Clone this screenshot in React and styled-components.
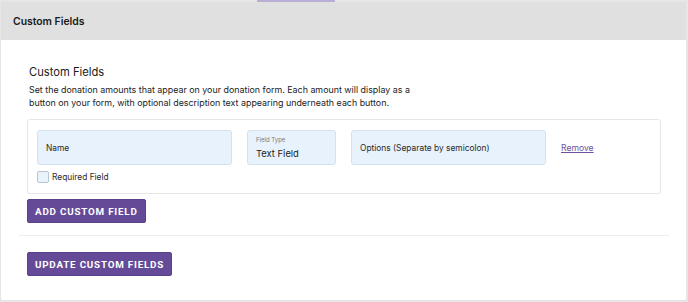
import styled, { createGlobalStyle } from "styled-components";

const GlobalStyle = createGlobalStyle`
  html, body {
    margin: 0;
    padding: 0;
    background: #e6e6e6;
    font-family: Inter, "Liberation Sans", Arial, sans-serif;
    color: #222;
  }
`;

const Page = styled.div`
  padding: 0 2px 2px 1px;
  height: 302px;
  box-sizing: border-box;
  display: flex;
  flex-direction: column;
`;

const TabStrip = styled.div`
  height: 2px;
  display: flex;
`;

const ActiveTab = styled.div`
  margin-left: 256px;
  width: 78px;
  background: #b9aed3;
`;

const Panel = styled.section`
  flex: 1;
  background: #fff;
  border-radius: 0 2px 2px 2px;
  display: flex;
  flex-direction: column;
`;

const PanelHeader = styled.header`
  height: 38px;
  background: #e0e0e0;
  display: flex;
  align-items: center;
  padding-left: 12px;
  font-size: 10.4px;
  font-weight: 600;
  color: #1a1a1a;
`;

const PanelBody = styled.div`
  padding: 0 17px 0 18px;
`;

const Section = styled.div`
  padding: 24px 8px 12px;
`;

const Title = styled.h2`
  margin: 0 0 3px 2px;
  font-size: 11.2px;
  line-height: 16px;
  font-weight: 400;
  color: #1a1a1a;
`;

const Description = styled.p`
  margin: 0 0 10px 2px;
  max-width: 400px;
  font-size: 8.9px;
  line-height: 13px;
  color: #222;
`;

const FieldCard = styled.div`
  border: 1px solid #e6e6e6;
  border-radius: 3px;
  padding: 10px 9px 10px;
`;

const FieldRow = styled.div`
  display: flex;
  align-items: center;
  gap: 15px;
`;

const InputBox = styled.div`
  box-sizing: border-box;
  width: ${(p) => p.$width}px;
  height: 35px;
  background: #e7f2fc;
  border: 1px solid #d3e2ee;
  border-radius: 3px;
  padding: 0 8px;
  display: flex;
  flex-direction: column;
  justify-content: center;
  font-size: 8.4px;
  color: #2a2a2a;
`;

const SelectLabel = styled.span`
  font-size: 6px;
  color: #7a7a7a;
  line-height: 8px;
`;

const SelectValue = styled.span`
  margin-top: 3px;
  font-size: 9.4px;
  color: #1a1a1a;
  line-height: 13px;
`;

const RemoveLink = styled.a`
  font-size: 8.6px;
  color: #6a52a0;
  text-decoration: underline;
  cursor: pointer;
`;

const CheckRow = styled.label`
  margin-top: 6px;
  display: flex;
  align-items: center;
  gap: 3px;
  font-size: 8.4px;
  color: #2a2a2a;
  height: 12px;
`;

const CheckBox = styled.span`
  box-sizing: border-box;
  width: 12px;
  height: 12px;
  border: 1px solid #b8c5d1;
  border-radius: 2px;
  background: #e9f3fc;
`;

const Button = styled.button`
  display: block;
  margin-top: ${(p) => p.$top}px;
  height: 24px;
  padding: 0 7px;
  background: #654a97;
  border: 1px solid #5a4189;
  border-radius: 2px;
  color: #fff;
  font-family: Roboto, "Liberation Sans", Arial, sans-serif;
  font-weight: 700;
  font-size: 9.8px;
  letter-spacing: 0.8px;
  text-transform: uppercase;
  cursor: pointer;
`;

const Divider = styled.hr`
  margin: 0;
  border: none;
  border-top: 1px solid #ececec;
`;

const Footer = styled.div`
  padding: 16px 8px 0;
`;

const App = () => {
  return (
    <>
      <GlobalStyle />
      <Page>
        <TabStrip>
          <ActiveTab />
        </TabStrip>
        <Panel>
          <PanelHeader>Custom Fields</PanelHeader>
          <PanelBody>
            <Section>
              <Title>Custom Fields</Title>
              <Description>
                Set the donation amounts that appear on your donation form. Each
                amount will display as a
                <br />
                button on your form, with optional description text appearing
                underneath each button.
              </Description>
              <FieldCard>
                <FieldRow>
                  <InputBox $width={195}>Name</InputBox>
                  <InputBox $width={89}>
                    <SelectLabel>Field Type</SelectLabel>
                    <SelectValue>Text Field</SelectValue>
                  </InputBox>
                  <InputBox $width={195}>Options (Separate by semicolon)</InputBox>
                  <RemoveLink>Remove</RemoveLink>
                </FieldRow>
                <CheckRow>
                  <CheckBox />
                  Required Field
                </CheckRow>
              </FieldCard>
              <Button $top={5}>Add Custom Field</Button>
            </Section>
            <Divider />
            <Footer>
              <Button $top={0}>Update Custom Fields</Button>
            </Footer>
          </PanelBody>
        </Panel>
      </Page>
    </>
  );
};

export default App;
